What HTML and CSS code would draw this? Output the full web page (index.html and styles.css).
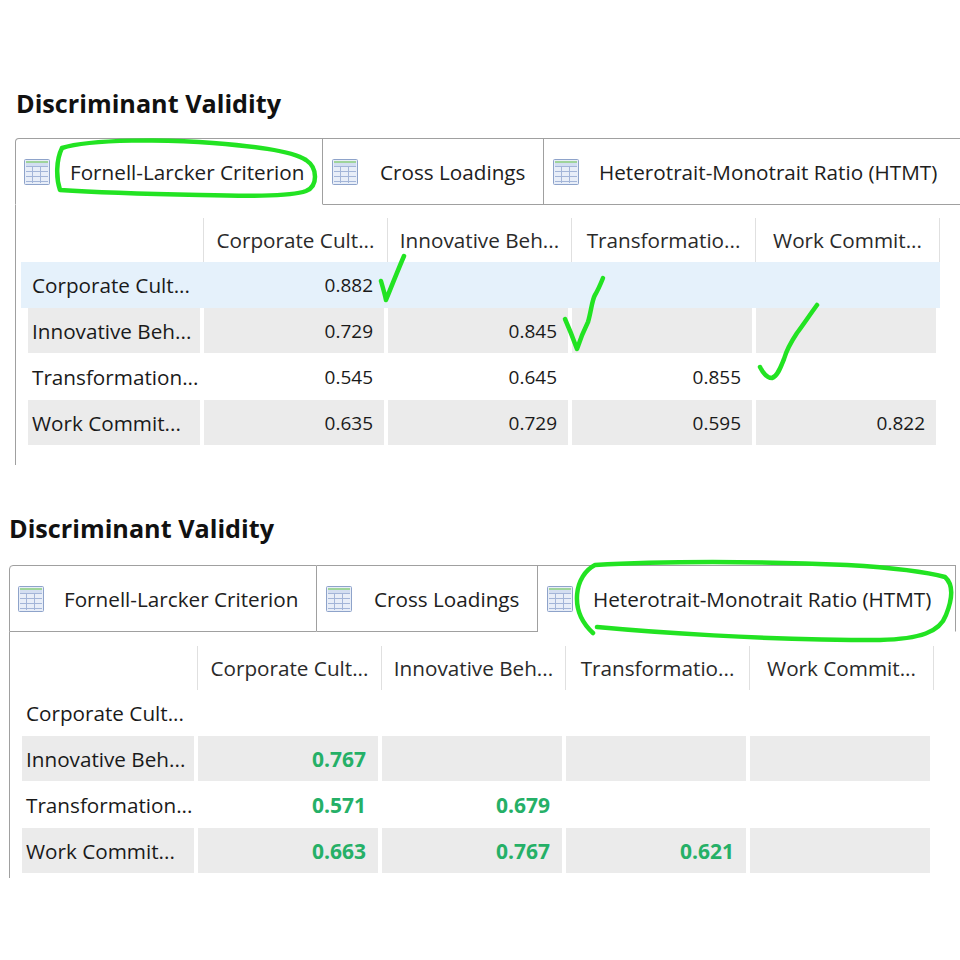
FILE: index.html
```html
<!DOCTYPE html>
<html lang="en">
<head>
<meta charset="utf-8">
<title>Discriminant Validity</title>
<link rel="stylesheet" href="styles.css">
</head>
<body>
<main class="view">
  <section class="sec sec-a">
    <h2 class="title">Discriminant Validity</h2>
    <div class="tabs">
      <div class="tab tab-1 active">
        <svg class="ico" viewBox="0 0 26 26" width="26" height="26"><rect x="0.5" y="0.5" width="25" height="25" rx="1" fill="#e8eef8" stroke="#8ea3ca"/><rect x="2" y="2" width="22" height="2" fill="#9fd49b"/><rect x="2" y="4" width="22" height="3" fill="#d3def1"/><path d="M2 7.5H24M2 12.5H24M2 17.5H24M2 22.5H24M8.5 7V24M16.5 7V24" stroke="#a3b5d8" stroke-width="1" fill="none"/></svg>
        <span>Fornell-Larcker Criterion</span>
      </div>
      <div class="tab tab-2">
        <svg class="ico" viewBox="0 0 26 26" width="26" height="26"><rect x="0.5" y="0.5" width="25" height="25" rx="1" fill="#e8eef8" stroke="#8ea3ca"/><rect x="2" y="2" width="22" height="2" fill="#9fd49b"/><rect x="2" y="4" width="22" height="3" fill="#d3def1"/><path d="M2 7.5H24M2 12.5H24M2 17.5H24M2 22.5H24M8.5 7V24M16.5 7V24" stroke="#a3b5d8" stroke-width="1" fill="none"/></svg>
        <span>Cross Loadings</span>
      </div>
      <div class="tab tab-3">
        <svg class="ico" viewBox="0 0 26 26" width="26" height="26"><rect x="0.5" y="0.5" width="25" height="25" rx="1" fill="#e8eef8" stroke="#8ea3ca"/><rect x="2" y="2" width="22" height="2" fill="#9fd49b"/><rect x="2" y="4" width="22" height="3" fill="#d3def1"/><path d="M2 7.5H24M2 12.5H24M2 17.5H24M2 22.5H24M8.5 7V24M16.5 7V24" stroke="#a3b5d8" stroke-width="1" fill="none"/></svg>
        <span>Heterotrait-Monotrait Ratio (HTMT)</span>
      </div>
    </div>
    <div class="grid-body">
      <div class="hdr">
        <div class="hdr-blank"></div>
        <div class="hcell">Corporate Cult...</div>
        <div class="hcell">Innovative Beh...</div>
        <div class="hcell">Transformatio...</div>
        <div class="hcell">Work Commit...</div>
      </div>
      <div class="row sel">
        <div class="cell lbl">Corporate Cult...</div>
        <div class="cell">0.882</div>
        <div class="cell"></div>
        <div class="cell"></div>
        <div class="cell"></div>
      </div>
      <div class="row alt">
        <div class="cell lbl">Innovative Beh...</div>
        <div class="cell">0.729</div>
        <div class="cell">0.845</div>
        <div class="cell"></div>
        <div class="cell"></div>
      </div>
      <div class="row">
        <div class="cell lbl">Transformation...</div>
        <div class="cell">0.545</div>
        <div class="cell">0.645</div>
        <div class="cell">0.855</div>
        <div class="cell"></div>
      </div>
      <div class="row alt">
        <div class="cell lbl">Work Commit...</div>
        <div class="cell">0.635</div>
        <div class="cell">0.729</div>
        <div class="cell">0.595</div>
        <div class="cell">0.822</div>
      </div>
    </div>
  </section>

  <section class="sec sec-b">
    <h2 class="title">Discriminant Validity</h2>
    <div class="tabs">
      <div class="tab tab-1">
        <svg class="ico" viewBox="0 0 26 26" width="26" height="26"><rect x="0.5" y="0.5" width="25" height="25" rx="1" fill="#e8eef8" stroke="#8ea3ca"/><rect x="2" y="2" width="22" height="2" fill="#9fd49b"/><rect x="2" y="4" width="22" height="3" fill="#d3def1"/><path d="M2 7.5H24M2 12.5H24M2 17.5H24M2 22.5H24M8.5 7V24M16.5 7V24" stroke="#a3b5d8" stroke-width="1" fill="none"/></svg>
        <span>Fornell-Larcker Criterion</span>
      </div>
      <div class="tab tab-2">
        <svg class="ico" viewBox="0 0 26 26" width="26" height="26"><rect x="0.5" y="0.5" width="25" height="25" rx="1" fill="#e8eef8" stroke="#8ea3ca"/><rect x="2" y="2" width="22" height="2" fill="#9fd49b"/><rect x="2" y="4" width="22" height="3" fill="#d3def1"/><path d="M2 7.5H24M2 12.5H24M2 17.5H24M2 22.5H24M8.5 7V24M16.5 7V24" stroke="#a3b5d8" stroke-width="1" fill="none"/></svg>
        <span>Cross Loadings</span>
      </div>
      <div class="tab tab-3 active">
        <svg class="ico" viewBox="0 0 26 26" width="26" height="26"><rect x="0.5" y="0.5" width="25" height="25" rx="1" fill="#e8eef8" stroke="#8ea3ca"/><rect x="2" y="2" width="22" height="2" fill="#9fd49b"/><rect x="2" y="4" width="22" height="3" fill="#d3def1"/><path d="M2 7.5H24M2 12.5H24M2 17.5H24M2 22.5H24M8.5 7V24M16.5 7V24" stroke="#a3b5d8" stroke-width="1" fill="none"/></svg>
        <span>Heterotrait-Monotrait Ratio (HTMT)</span>
      </div>
    </div>
    <div class="grid-body">
      <div class="hdr">
        <div class="hdr-blank"></div>
        <div class="hcell">Corporate Cult...</div>
        <div class="hcell">Innovative Beh...</div>
        <div class="hcell">Transformatio...</div>
        <div class="hcell">Work Commit...</div>
      </div>
      <div class="row">
        <div class="cell lbl">Corporate Cult...</div>
        <div class="cell"></div>
        <div class="cell"></div>
        <div class="cell"></div>
        <div class="cell"></div>
      </div>
      <div class="row alt">
        <div class="cell lbl">Innovative Beh...</div>
        <div class="cell hi">0.767</div>
        <div class="cell"></div>
        <div class="cell"></div>
        <div class="cell"></div>
      </div>
      <div class="row">
        <div class="cell lbl">Transformation...</div>
        <div class="cell hi">0.571</div>
        <div class="cell hi">0.679</div>
        <div class="cell"></div>
        <div class="cell"></div>
      </div>
      <div class="row alt">
        <div class="cell lbl">Work Commit...</div>
        <div class="cell hi">0.663</div>
        <div class="cell hi">0.767</div>
        <div class="cell hi">0.621</div>
        <div class="cell"></div>
      </div>
    </div>
  </section>
</main>

<svg class="marks" viewBox="0 0 960 960" width="960" height="960" aria-hidden="true">
  <g fill="none" stroke="#22e322" stroke-width="4.5" stroke-linecap="round" stroke-linejoin="round">
    <path d="M62 148 C 90 139, 170 139, 213 143 C 250 146, 290 150, 306 160 C 318 168, 318 186, 306 191 C 290 197, 240 196, 200 195 C 150 194, 90 192, 60 190 C 56 178, 56 160, 62 148"/>
    <path d="M381 281 C 383 288, 385 295, 386 300 C 392 285, 398 270, 404 256"/>
    <path d="M565 319 C 569 328, 573 338, 577 349 C 580 340, 583 332, 588 322 C 591 312, 592 300, 595 295 C 598 290, 601 283, 603 278"/>
    <path d="M760 367 C 763 373, 767 378, 772 378 C 778 376, 781 366, 784 359 C 786 352, 789 345, 797 333 C 803 325, 809 316, 817 305"/>
    <path d="M597 627 C 650 632, 760 640, 880 640 C 920 639, 940 632, 946 615 C 952 600, 954 585, 945 577 C 920 570, 880 567, 847 565 C 760 561, 660 561, 595 565 C 575 575, 568 610, 593 633"/>
  </g>
</svg>
</body>
</html>
```

FILE: styles.css
```css
* { box-sizing: border-box; }

html, body {
  margin: 0;
  background: #ffffff;
}

body {
  position: relative;
  width: 960px;
  height: 960px;
  overflow: hidden;
  font-family: "Open Sans", "Noto Sans", sans-serif;
  color: #1a1a1a;
}

.view {
  padding-top: 86px;
}

.sec-a {
  margin-left: 15px;
}

.sec-b {
  margin-left: 9px;
  margin-right: 4px;
  margin-top: 46px;
}

.title {
  margin: 0 0 18px;
  font-size: 25.2px;
  line-height: 34px;
  font-weight: 700;
  color: #111111;
}

.sec-a .title {
  margin-left: 1px;
}

.sec-b .title {
  margin-bottom: 20px;
}

.tabs {
  display: flex;
  height: 67px;
}

.tab {
  display: flex;
  align-items: center;
  gap: 20px;
  padding-left: 9px;
  border-top: 1px solid #a0a0a0;
  border-right: 1px solid #a0a0a0;
  border-bottom: 1px solid #a0a0a0;
  background: #ffffff;
  font-size: 20.7px;
  color: #202020;
  white-space: nowrap;
  overflow: hidden;
}

.tab:first-child {
  border-left: 1px solid #a0a0a0;
  border-top-left-radius: 4px;
  padding-left: 8px;
}

.tab.active {
  border-bottom-color: transparent;
}

.ico {
  flex: none;
  display: block;
}

.tab-1 { width: 308px; }
.tab-2 { width: 221px; gap: 22px; }
.tab-3 { flex: 1; }

.sec-a .tab-3 {
  border-right: none;
}

.grid-body {
  border-left: 1px solid #a0a0a0;
  padding: 13px 0 19px 5px;
}

.sec-b .grid-body {
  padding-top: 14px;
  padding-bottom: 4px;
}

.hdr {
  display: flex;
  height: 44px;
  padding-left: 7px;
}

.hdr-blank {
  width: 175px;
}

.hcell {
  width: 184px;
  border-left: 1px solid #e0e0e0;
  padding-top: 1px;
  line-height: 43px;
  text-align: center;
  font-size: 20.7px;
  color: #2a2a2a;
  white-space: nowrap;
}

.hcell:last-child {
  width: 185px;
  border-right: 1px solid #e0e0e0;
}

.row {
  display: flex;
  gap: 4px;
  width: 919px;
  height: 46px;
  padding: 0 4px 1px 7px;
}

.row.sel {
  background: #e5f1fb;
}

.cell {
  width: 180px;
  padding-top: 2px;
  line-height: 43px;
  font-size: 19px;
  text-align: right;
  padding-right: 11px;
  white-space: nowrap;
}

.lbl {
  width: 172px;
  text-align: left;
  padding-left: 4px;
  padding-right: 0;
  font-size: 20.7px;
}

.alt .cell {
  background: #ebebeb;
}

.hi {
  color: #25b067;
  font-weight: 700;
  font-size: 21px;
  padding-right: 12px;
}

.marks {
  position: absolute;
  left: 0;
  top: 0;
  pointer-events: none;
}
```
